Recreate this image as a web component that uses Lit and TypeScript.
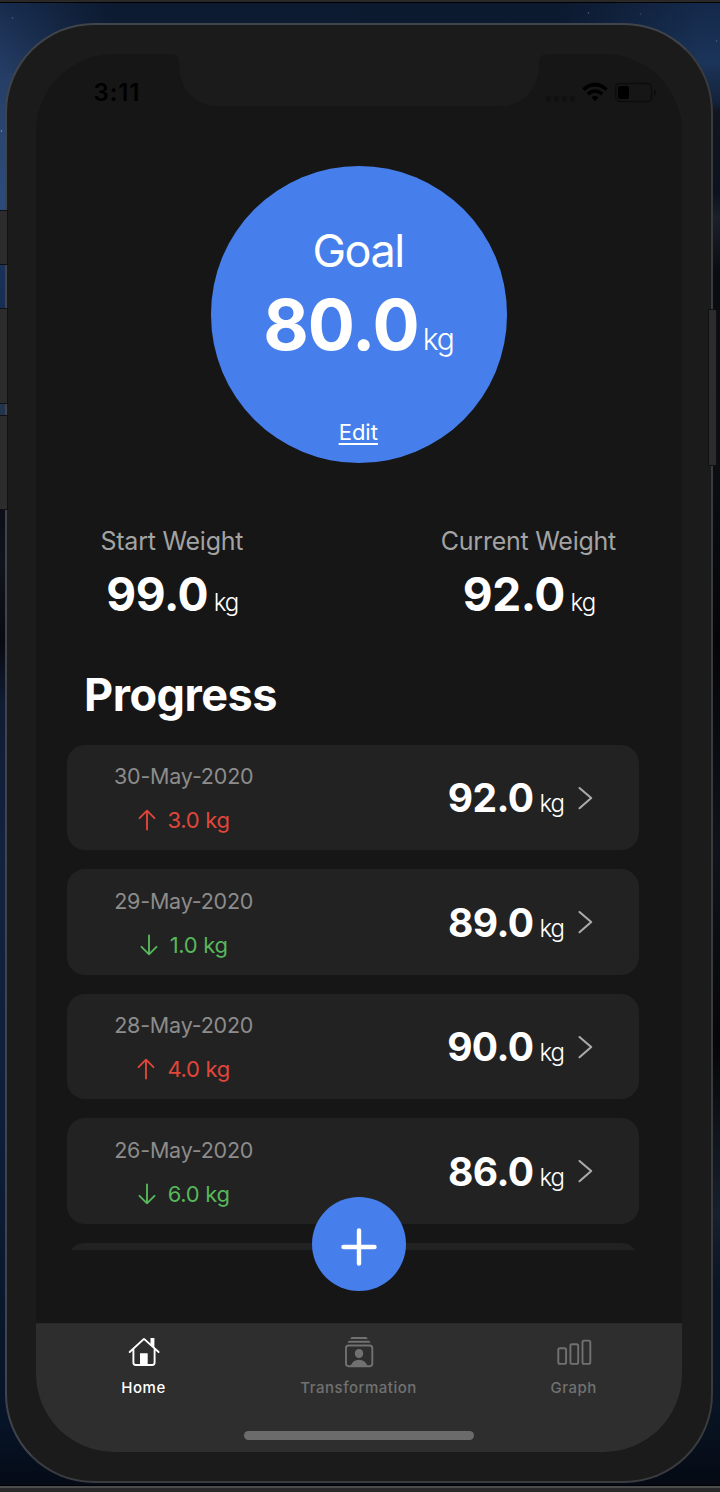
import { LitElement, html, svg, css } from "lit";
import { customElement, property } from "lit/decorators.js";

interface Entry {
  date: string;
  delta: string;
  up: boolean;
  weight: string;
}

const ENTRIES: Entry[] = [
  { date: "30-May-2020", delta: "3.0 kg", up: true, weight: "92.0" },
  { date: "29-May-2020", delta: "1.0 kg", up: false, weight: "89.0" },
  { date: "28-May-2020", delta: "4.0 kg", up: true, weight: "90.0" },
  { date: "26-May-2020", delta: "6.0 kg", up: false, weight: "86.0" },
];

const FONT = css`"Inter", "Liberation Sans", sans-serif`;

@customElement("weight-row")
class WeightRow extends LitElement {
  @property({ attribute: false }) entry!: Entry;

  static styles = css`
    :host { display: block; font-family: ${FONT}; }
    .card {
      box-sizing: border-box; height: 105.4px; border-radius: 18px; background: #222222;
      display: flex; justify-content: space-between; padding: 0 46px;
    }
    .left { width: 141px; display: flex; flex-direction: column; align-items: center; padding-top: 17.6px; }
    .date { font-size: 21.5px; font-weight: 400; line-height: 28px; color: #8c8c8c; letter-spacing: -0.2px; white-space: nowrap; }
    .delta { display: flex; align-items: center; gap: 12px; margin-top: 16px; font-size: 22px; line-height: 28px; letter-spacing: -0.3px; white-space: nowrap; }
    .delta svg { width: 18px; height: 22px; display: block; fill: none; stroke: currentColor; stroke-width: 1.9; stroke-linecap: round; stroke-linejoin: round; }
    .up { color: #e0463a; }
    .down { color: #57b75b; }
    .right { display: flex; align-items: baseline; padding-top: 27.6px; color: #fff; white-space: nowrap; }
    .value { font-size: 39px; line-height: 52px; font-weight: 700; letter-spacing: -0.6px; }
    .unit { font-size: 24px; font-weight: 350; margin-left: 6px; letter-spacing: -1px; }
    .chev { width: 15px; height: 24px; margin-left: 14px; align-self: flex-start; margin-top: 13.6px; fill: none; stroke: #ababab; stroke-width: 2.1; stroke-linecap: round; stroke-linejoin: round; }
  `;

  render() {
    const e = this.entry;
    return html`<div class="card">
      <div class="left">
        <div class="date">${e.date}</div>
        <div class="delta ${e.up ? "up" : "down"}">
          <svg viewBox="0 0 18 22">
            ${e.up
              ? svg`<path d="M9 20.5V1.7M1.5 9.2 9 1.7l7.5 7.5" />`
              : svg`<path d="M9 1.5v18.8M1.5 12.8 9 20.3l7.5-7.5" />`}
          </svg>
          <span>${e.delta}</span>
        </div>
      </div>
      <div class="right">
        <span class="value">${e.weight}</span><span class="unit">kg</span>
        <svg class="chev" viewBox="0 0 15 24"><path d="M1.5 2 13.2 12 1.5 22.2" /></svg>
      </div>
    </div>`;
  }
}

@customElement("app-root")
class AppRoot extends LitElement {
  static styles = css`
    :host { display: block; font-family: ${FONT}; }
    * { box-sizing: border-box; }
    .desk { width: 720px; height: 1492px; display: flex; flex-direction: column; overflow: hidden; background: #2b2b2d; }
    .edge-top { height: 3px; background: #29292a; border-bottom: 1px solid #000; flex: none; }
    .edge-bottom { height: 7px; background: #29292b; border-top: 2px solid #4a4c4d; flex: none; }
    .wall {
      position: relative; flex: 1; padding: 20px 7px 2px 5px; border-bottom: 1px solid #000;
      background:
        radial-gradient(circle 1.2px at 12.5px 15px, #53698a, transparent),
        radial-gradient(circle 1.2px at 588.5px 10px, #53698a, transparent),
        radial-gradient(circle 1.2px at 640.5px 11px, #3a4d6a, transparent),
        radial-gradient(circle 1.2px at 716.5px 38px, #53698a, transparent),
        radial-gradient(circle 1.2px at 1.5px 128px, #8fa7c8, transparent),
        linear-gradient(90deg, rgba(9,18,34,0) 0, rgba(9,20,38,.75) 110px, rgba(9,20,38,.75) 560px, rgba(9,20,38,0) 700px) 0 0 / 720px 70px no-repeat,
        linear-gradient(180deg, #14294a 0, #1b3459 60px, #14233c 98px, #11151f 110px, #0d1220 190px, #1b202b 215px, #0b0c12 270px, #0c0e14 460px, #050509 640px, #10131b 850px, #060608 1040px, #10131a 1120px, #16202e 1210px, #0a1526 1280px, #091525 1400px, #050a14 1480px) 360px 0 / 360px 100% no-repeat,
        linear-gradient(180deg, #172c4e 0, #243c63 60px, #2a4570 130px, #2c4b7c 200px, #1a315a 260px, #152a4e 340px, #22364f 405px, #0b0e18 500px, #10141c 560px, #090a11 640px, #101c33 700px, #12233f 850px, #0d1f3a 1100px, #08182d 1300px, #071427 1420px, #050b17 1480px);
    }
    .key { position: absolute; background: #2c2c2c; border: 1px solid #111; z-index: 1; }
    .key.l { left: -2px; width: 9.5px; }
    .mute { top: 207px; height: 55px; }
    .vup { top: 305px; height: 96px; }
    .vdn { top: 412px; height: 95px; }
    .key.power { left: 708px; width: 8.5px; top: 306px; height: 157px; border-radius: 0 2px 2px 0; }
    .phone {
      position: relative; height: 1460px; border: 2px solid #3b3e43; border-color: #40444b #3a3b3d #3a3b3e #40444a; border-radius: 89px;
      background: #1b1b1b; padding: 29px 29px 29px 29px;
    }
    .notch { position: absolute; z-index: 1; left: 164px; top: 28px; width: 376px; height: 54px; fill: #1b1b1b; }
    .screen { height: 1398px; border-radius: 78px; background: #161616; overflow: hidden; display: flex; flex-direction: column; }
    .status { height: 112px; flex: none; display: flex; justify-content: space-between; padding: 24px 24.5px 0 57.5px; color: #000; }
    .time { font-size: 24px; font-weight: 600; line-height: 30px; letter-spacing: 0.9px; }
    .status svg { width: 114px; height: 30px; }
    .goal {
      width: 296.5px; height: 296.5px; flex: none; border-radius: 50%; background: #467fec; color: #fff;
      margin-left: 174.8px; display: flex; flex-direction: column; align-items: center; white-space: nowrap;
    }
    .goal-title { font-size: 45px; line-height: 56px; margin-top: 56.5px; font-weight: 400; letter-spacing: -1.5px; padding-right: 2px; }
    .goal-num { display: flex; align-items: baseline; line-height: 80px; margin-top: 6px; padding-right: 1.5px; }
    .goal-num b { font-size: 70px; font-weight: 700; letter-spacing: -0.9px; }
    .goal-num span { font-size: 30px; font-weight: 350; margin-left: 4px; letter-spacing: -1.3px; }
    .edit { font-size: 22px; line-height: 28px; margin-top: 39px; padding-right: 1.5px; text-decoration: underline; text-decoration-thickness: 1.5px; text-underline-offset: 2.5px; text-decoration-skip-ink: none; }
    .stats { display: flex; justify-content: space-between; padding: 0 66px 0 64.5px; margin-top: 62px; flex: none; white-space: nowrap; }
    .stat { display: flex; flex-direction: column; align-items: center; }
    .cap { font-size: 25px; line-height: 32px; color: #a3a3a3; letter-spacing: -0.25px; }
    .num { display: flex; align-items: baseline; line-height: 58px; margin-top: 8px; padding-left: 1px; color: #fff; }
    .num b { font-size: 46px; font-weight: 700; letter-spacing: -0.4px; }
    .num span { font-size: 24px; font-weight: 350; margin-left: 5.5px; letter-spacing: -1px; }
    h1 { margin: 35px 0 0 48px; font-size: 45px; line-height: 56px; font-weight: 700; letter-spacing: -0.5px; color: #fff; flex: none; }
    .list { height: 505.5px; flex: none; overflow: hidden; margin: 22.3px 43px 0 31.2px; display: flex; flex-direction: column; gap: 19.1px; }
    .list > * { flex: none; }
    .peek { height: 105px; border-radius: 18px; background: #222222; }
    .tabs { margin-top: auto; height: 129.5px; flex: none; background: #2e2e2e; border-top: 1px solid #292929; display: flex; padding: 11px 0.8px 0 0; }
    .tab { flex: 1; display: flex; flex-direction: column; align-items: center; gap: 7px; color: #717171; font-size: 15px; line-height: 24px; font-weight: 500; letter-spacing: 0.5px; }
    .tab.on { color: #fff; }
    .tab svg { width: 46px; height: 34px; fill: none; stroke: currentColor; stroke-width: 1.9; stroke-linejoin: round; stroke-linecap: round; }
    .tab .solid { fill: currentColor; stroke: none; }
    .bar { position: absolute; left: 237px; top: 1406px; width: 230px; height: 9px; border-radius: 5px; background: #6b6b6b; }
    .fab { position: absolute; left: 305px; top: 1172px; width: 94px; height: 94px; border-radius: 50%; background: #467fec; display: flex; align-items: center; justify-content: center; }
    .fab svg { width: 40px; height: 40px; stroke: #fff; stroke-width: 4.4; stroke-linecap: round; margin: 5px 1px 0 0; }
  `;

  render() {
    return html`<div class="desk">
      <div class="edge-top"></div>
      <div class="wall">
        <div class="key l mute"></div>
        <div class="key l vup"></div>
        <div class="key l vdn"></div>
        <div class="key power"></div>
        <div class="phone">
          <svg class="notch" viewBox="0 0 376 54">
            <path d="M0 0V1.5C6 1.500 8 4 8 11C8 36 24 53 46 53H330C352 53 368 36 368 11C368 4 370 1.500 376 1.500V0Z" />
          </svg>
          <div class="screen">
            <div class="status">
              <span class="time">3:11</span>
              <svg viewBox="0 0 114 30">
                <g fill="#101010">
                  <rect x="2" y="18" width="5" height="5.500" rx="1.500" /><rect x="10" y="18" width="5" height="5.500" rx="1.500" />
                  <rect x="18" y="18" width="5" height="5.500" rx="1.500" /><rect x="26" y="18" width="5" height="5.500" rx="1.500" />
                </g>
                <g fill="none" stroke="#000" stroke-width="3.600">
                  <path d="M39.500 11.600Q51 1.800 62.500 11.600" />
                  <path d="M43.800 16Q51 10 58.200 16" />
                </g>
                <path d="M47.300 19.300Q51 16.300 54.700 19.300L51 23.300Z" />
                <rect x="71.700" y="5.500" width="36" height="18" rx="4.500" fill="none" stroke="#0d0d0d" stroke-width="1.600" />
                <rect x="74" y="8" width="11" height="13" rx="2.200" />
                <path d="M110 11.500q2.500 1 2.500 3t-2.500 3z" fill="#0d0d0d" />
              </svg>
            </div>
            <div class="goal">
              <div class="goal-title">Goal</div>
              <div class="goal-num"><b>80.0</b><span>kg</span></div>
              <div class="edit">Edit</div>
            </div>
            <div class="stats">
              <div class="stat"><div class="cap">Start Weight</div><div class="num"><b>99.0</b><span>kg</span></div></div>
              <div class="stat"><div class="cap">Current Weight</div><div class="num"><b>92.0</b><span>kg</span></div></div>
            </div>
            <h1>Progress</h1>
            <div class="list">
              ${ENTRIES.map((e) => html`<weight-row .entry=${e}></weight-row>`)}
              <div class="peek"></div>
            </div>
            <div class="tabs">
              <div class="tab on">
                <svg viewBox="0 0 46 34">
                  <path d="M8.700 17 23 3.900 37.600 17M12.400 14.500V27.500Q12.400 30 14.900 30H31.100Q33.600 30 33.600 27.500V14.500" />
                  <path class="solid" d="M29.500 3h3.900v10l-3.900-3.500zM19 18.300h7.700v11.200h-7.700z" />
                </svg>
                <span>Home</span>
              </div>
              <div class="tab">
                <svg viewBox="0 0 46 34">
                  <path class="solid" d="M15.600 2h14.800l1.400 1.900H14.200zM12.800 5.800h20.400l1.300 2H11.500z" />
                  <rect x="10" y="10.500" width="26.300" height="20.700" rx="2.600" />
                  <ellipse class="solid" cx="23" cy="18.500" rx="4.200" ry="4.600" />
                  <path class="solid" d="M14.500 31Q17 24.800 23 24.800T31.500 31z" />
                </svg>
                <span>Transformation</span>
              </div>
              <div class="tab">
                <svg viewBox="0 0 46 34">
                  <rect x="7.300" y="13.200" width="7.800" height="15.700" rx="1.600" />
                  <rect x="19.400" y="9.300" width="7.800" height="19.600" rx="1.600" />
                  <rect x="31.500" y="5.600" width="7.800" height="23.300" rx="1.600" />
                </svg>
                <span>Graph</span>
              </div>
            </div>
          </div>
          <div class="fab"><svg viewBox="0 0 40 40"><path d="M20 3.500v33M4.500 20h31" /></svg></div>
          <div class="bar"></div>
        </div>
      </div>
      <div class="edge-bottom"></div>
    </div>`;
  }
}
